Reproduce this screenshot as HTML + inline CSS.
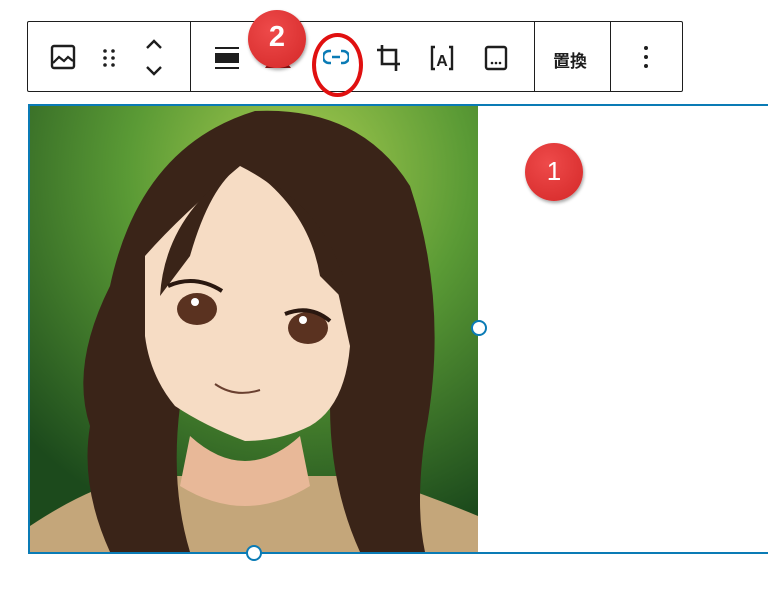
<!DOCTYPE html>
<html><head><meta charset="utf-8"><style>
html,body{margin:0;padding:0;background:#fff;width:768px;height:594px;overflow:hidden;position:relative;font-family:"Liberation Sans","Noto Sans CJK JP",sans-serif}
.tb{position:absolute;left:27px;top:21px;width:654px;height:69px;border:1px solid #1e1e1e;border-radius:2px;background:#fff}
.dv{position:absolute;top:0;width:1px;height:69px;background:#1e1e1e}
.ic{position:absolute}
.frame{position:absolute;left:28px;top:104px;width:750px;height:446px;border:2px solid #0a7bb5;border-right:none}
.h{position:absolute;width:16px;height:16px;border-radius:50%;background:#fff;border:2.5px solid #0a7bb5;box-sizing:border-box}
.badge{position:absolute;border-radius:50%;background:radial-gradient(circle at 40% 35%,#ee4a4a,#d42828);color:#fff;font-weight:bold;text-align:center;box-shadow:1px 2px 3px rgba(0,0,0,.35)}
</style></head><body>
<div class="tb">
 <div class="dv" style="left:162px"></div>
 <div class="dv" style="left:506px"></div>
 <div class="dv" style="left:582px"></div>
 <svg class="ic" style="left:22px;top:22px" width="26" height="26" viewBox="0 0 26 26"><rect x="2" y="2" width="22" height="22" rx="2" fill="none" stroke="#1e1e1e" stroke-width="2.4"/><path d="M3 19 L9 13 L14 17 L18 13 L23 17" fill="none" stroke="#1e1e1e" stroke-width="2.2"/></svg>
 <svg class="ic" style="left:74px;top:26px" width="14" height="20"><g fill="#1e1e1e"><circle cx="3" cy="3" r="1.8"/><circle cx="11" cy="3" r="1.8"/><circle cx="3" cy="10" r="1.8"/><circle cx="11" cy="10" r="1.8"/><circle cx="3" cy="17" r="1.8"/><circle cx="11" cy="17" r="1.8"/></g></svg>
 <svg class="ic" style="left:116px;top:16px" width="20" height="40"><path d="M3 10 L10 3 L17 10 M3 29 L10 36 L17 29" fill="none" stroke="#1e1e1e" stroke-width="2.4"/></svg>
 <svg class="ic" style="left:186px;top:24px" width="26" height="24"><rect x="1" y="1" width="24" height="2" fill="#1e1e1e"/><rect x="1" y="7" width="24" height="10" fill="#1e1e1e"/><rect x="1" y="21" width="24" height="2" fill="#1e1e1e"/></svg>
 <svg class="ic" style="left:295px;top:27px" width="26" height="16"><path d="M8 2 H6 A6 6 0 0 0 6 14 H8 M18 2 H20 A6 6 0 0 1 20 14 H18 M9 8 H17" fill="none" stroke="#0a7bb5" stroke-width="2.6"/></svg>
 <svg class="ic" style="left:348px;top:22px" width="26" height="28"><path d="M6 1 V20 H24 M1 6 H20 V27" fill="none" stroke="#1e1e1e" stroke-width="2.6"/></svg>
 <svg class="ic" style="left:402px;top:23px" width="24" height="26"><path d="M5 2 H2 V24 H5 M19 2 H22 V24 H19" fill="none" stroke="#1e1e1e" stroke-width="2.4"/><text x="12" y="21" font-size="16" font-weight="bold" text-anchor="middle" fill="#1e1e1e" font-family="Liberation Sans">A</text></svg>
 <svg class="ic" style="left:456px;top:23px" width="24" height="26"><rect x="2" y="2" width="20" height="22" rx="2" fill="none" stroke="#1e1e1e" stroke-width="2.4"/><g fill="#1e1e1e"><circle cx="8" cy="18" r="1.3"/><circle cx="12" cy="18" r="1.3"/><circle cx="16" cy="18" r="1.3"/></g></svg>
 <div style="position:absolute;left:525px;top:25px;font-size:17px;font-weight:bold;color:#1e1e1e">置換</div>
 <svg class="ic" style="left:614px;top:23px" width="8" height="24"><g fill="#1e1e1e"><circle cx="4" cy="3" r="2"/><circle cx="4" cy="12" r="2"/><circle cx="4" cy="21" r="2"/></g></svg>
</div>
<svg style="position:absolute;left:263px;top:48px" width="32" height="22"><path d="M15 2 L28 20 H2 Z" fill="#a31616"/></svg>
<div class="badge" style="left:248px;top:10px;width:58px;height:58px;line-height:54px;font-size:29px">2</div>
<div style="position:absolute;left:312px;top:33px;width:43px;height:56px;border:4.5px solid #e01010;border-radius:50%"></div>

<svg style="position:absolute;left:30px;top:106px" width="448" height="446" viewBox="0 0 448 446">
 <defs>
  <radialGradient id="bg" cx="60%" cy="15%" r="85%"><stop offset="0" stop-color="#a8cc50"/><stop offset=".45" stop-color="#5a9a35"/><stop offset="1" stop-color="#1c4a1c"/></radialGradient>
 </defs>
 <rect width="448" height="446" fill="url(#bg)"/>
 <path d="M0 420 Q60 380 110 370 L340 370 Q400 390 448 410 L448 446 L0 446Z" fill="#c4a67a"/>
 <path d="M225 5 Q330 0 380 80 Q420 200 395 330 Q385 400 395 446 L330 446 Q300 380 300 300 L150 300 Q140 380 160 446 L80 446 Q50 380 60 320 Q40 260 80 180 Q110 40 225 5Z" fill="#3a2418"/>
 <path d="M210 60 Q270 90 300 150 L320 240 Q315 300 280 320 Q250 335 215 335 Q175 320 145 300 Q120 270 115 230 L115 150 Q150 110 210 60Z" fill="#f6dcc4"/>
 <path d="M210 60 Q180 80 160 150 L130 190 Q135 110 210 60Z M230 70 Q280 110 290 170 L320 200 Q305 110 230 70Z" fill="#3a2418"/>
 <ellipse cx="167" cy="203" rx="20" ry="16" fill="#5a3220"/><circle cx="165" cy="196" r="4" fill="#fff"/>
 <ellipse cx="278" cy="222" rx="20" ry="16" fill="#5a3220"/><circle cx="273" cy="214" r="4" fill="#fff"/>
 <path d="M138 180 Q165 168 192 185 M255 208 Q280 198 300 215" stroke="#2a1810" stroke-width="4" fill="none"/>
 <path d="M185 278 Q205 292 230 284" stroke="#6a4030" stroke-width="2" fill="none"/>
 <path d="M160 330 Q215 380 270 330 L280 380 Q215 420 150 380Z" fill="#e8b898"/>
</svg>
<div class="frame"></div>
<div class="h" style="left:471px;top:320px"></div>
<div class="h" style="left:246px;top:545px"></div>
<div class="badge" style="left:525px;top:143px;width:58px;height:58px;line-height:56px;font-size:26px;font-weight:normal">1</div>
</body></html>
